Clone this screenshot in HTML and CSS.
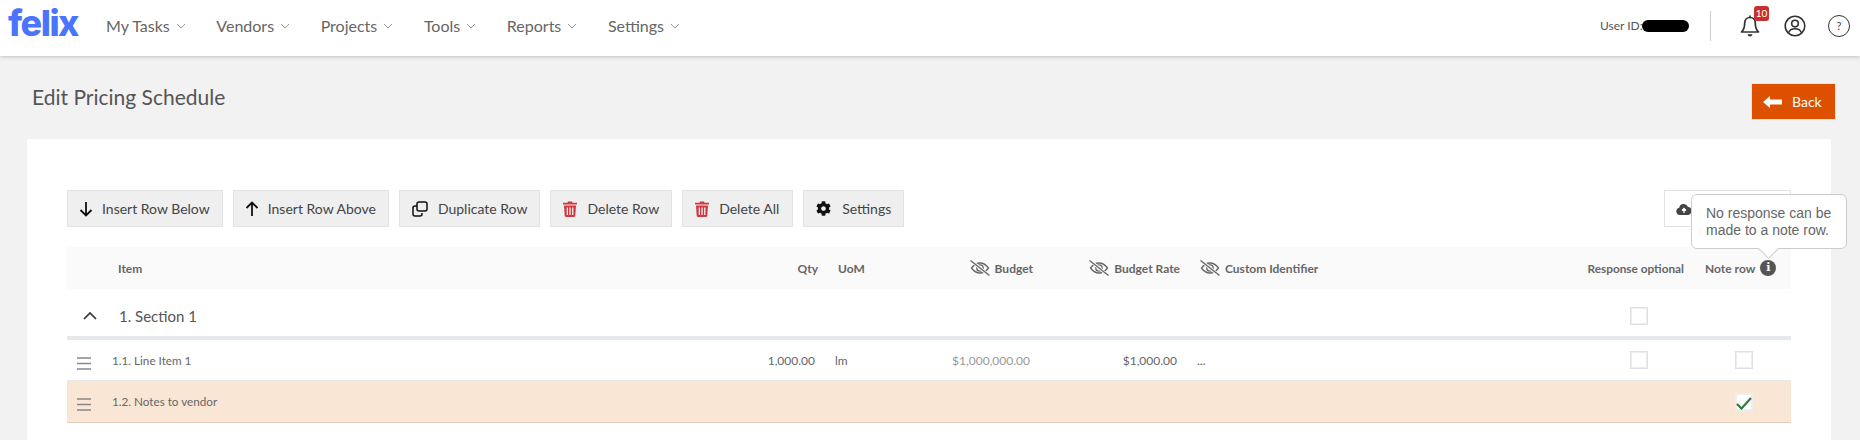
FILE: index.html
```html
<!DOCTYPE html>
<html lang="en">
<head>
<meta charset="utf-8">
<title>Edit Pricing Schedule</title>
<link rel="stylesheet" href="styles.css">
</head>
<body>
<svg class="sprites" width="0" height="0" aria-hidden="true">
  <symbol id="chev" viewBox="0 0 10 6"><path d="M1 1l4 4 4-4" fill="none" stroke="currentColor" stroke-width="1"/></symbol>
  <symbol id="eyeoff" viewBox="0 0 20 16"><path d="M1.5 8C4 4.6 6.800 3 10 3s6 1.600 8.500 5C16 11.400 13.200 13 10 13S4 11.400 1.500 8z" fill="none" stroke="currentColor" stroke-width="1.300"/><circle cx="10" cy="8" r="3.200" fill="none" stroke="currentColor" stroke-width="1.300"/><path d="M1 0.500L19 15.500" stroke="#fafafa" stroke-width="3"/><path d="M0.500 0.500L19.500 15.500" stroke="currentColor" stroke-width="1.300"/></symbol>
  <symbol id="trash" viewBox="0 0 14 16"><path d="M5 0.500h4l.6 1.300H14v1.700H0V1.800h4.400zM1 4.500h12l-.7 10.300c0 .7-.6 1.200-1.200 1.200H2.900c-.6 0-1.200-.5-1.200-1.200zM3.700 6.500v7.500h1.300V6.500zm2.700 0v7.500h1.300V6.500zm2.700 0v7.500h1.300V6.500z" fill="currentColor" fill-rule="evenodd"/></symbol>
  <symbol id="burger" viewBox="0 0 14 13"><path d="M0 1h14M0 6.500h14M0 12h14" stroke="currentColor" stroke-width="1.600"/></symbol>
</svg>

<header class="topbar">
  <div class="logo">felix</div>
  <nav class="nav">
    <a class="nav-item">My Tasks <svg class="chev"><use href="#chev"/></svg></a>
    <a class="nav-item">Vendors <svg class="chev"><use href="#chev"/></svg></a>
    <a class="nav-item">Projects <svg class="chev"><use href="#chev"/></svg></a>
    <a class="nav-item">Tools <svg class="chev"><use href="#chev"/></svg></a>
    <a class="nav-item">Reports <svg class="chev"><use href="#chev"/></svg></a>
    <a class="nav-item">Settings <svg class="chev"><use href="#chev"/></svg></a>
  </nav>
  <div class="user">
    <span class="user-id">User ID:</span><span class="redact"></span>
    <span class="divider"></span>
    <span class="bell">
      <svg class="bell-icon" viewBox="0 0 20 22"><path d="M10 2.500c3.300 0 5.300 2.500 5.300 5.800 0 4.700 1 6.500 3.200 8.700H1.500c2.200-2.200 3.200-4 3.200-8.700 0-3.300 2-5.800 5.300-5.800z" fill="none" stroke="#333" stroke-width="1.700" stroke-linejoin="round"/><path d="M10 0.500v2" stroke="#333" stroke-width="1.700"/><path d="M7.500 19.300h5c-.3 1.400-1.300 2.200-2.500 2.200s-2.200-.8-2.500-2.200z" fill="#333"/></svg>
      <span class="badge">10</span>
    </span>
    <svg class="round-icon" viewBox="0 0 22 22"><circle cx="11" cy="11" r="9.800" fill="none" stroke="#333" stroke-width="1.600"/><circle cx="11" cy="8.600" r="3.300" fill="none" stroke="#333" stroke-width="1.600"/><path d="M4.800 17.500c.8-2.500 3-3.700 6.200-3.700s5.400 1.200 6.200 3.700" fill="none" stroke="#333" stroke-width="1.600"/></svg>
    <span class="help">?</span>
  </div>
</header>

<main class="page">
  <div class="page-head">
    <h1 class="title">Edit Pricing Schedule</h1>
    <button class="back"><svg class="back-arrow" viewBox="0 0 19 12"><path d="M7 0v3.500h12v5H7V12L0 6z" fill="#fff"/></svg>Back</button>
  </div>

  <section class="card">
    <div class="toolbar">
      <button class="btn"><svg class="btn-icon" viewBox="0 0 14 16"><path d="M7 1v13.500M1.500 9L7 14.500 12.500 9" fill="none" stroke="#111" stroke-width="1.800"/></svg>Insert Row Below</button>
      <button class="btn"><svg class="btn-icon" viewBox="0 0 14 16"><path d="M7 15V1.500M1.500 7L7 1.500 12.500 7" fill="none" stroke="#111" stroke-width="1.800"/></svg>Insert Row Above</button>
      <button class="btn"><svg class="btn-icon wide" viewBox="0 0 16 16"><rect x="5" y="1" width="10" height="9" rx="2" fill="none" stroke="#111" stroke-width="1.500"/><path d="M5 5H3a2 2 0 0 0-2 2v6a2 2 0 0 0 2 2h5a2 2 0 0 0 2-2v-1" fill="none" stroke="#111" stroke-width="1.500"/></svg>Duplicate Row</button>
      <button class="btn"><svg class="btn-icon red"><use href="#trash"/></svg>Delete Row</button>
      <button class="btn btn-all"><svg class="btn-icon red"><use href="#trash"/></svg>Delete All</button>
      <button class="btn"><svg class="btn-icon gear" viewBox="0 0 512 512"><path fill="#111" d="M487.4 315.700l-42.600-24.600c4.300-23.200 4.300-47 0-70.200l42.600-24.600c4.900-2.800 7.100-8.600 5.500-14-11.100-35.600-30-67.800-54.700-94.600-3.800-4.100-10-5.100-14.800-2.300L380.800 110c-17.900-15.400-38.500-27.300-60.800-35.100V25.800c0-5.600-3.900-10.500-9.400-11.700-36.700-8.200-74.300-7.800-109.200 0-5.500 1.200-9.400 6.100-9.400 11.700V75c-22.200 7.900-42.800 19.800-60.800 35.100L88.700 85.500c-4.900-2.800-11-1.900-14.800 2.300-24.700 26.700-43.600 58.900-54.700 94.600-1.700 5.400.6 11.200 5.500 14L67.300 221c-4.300 23.200-4.300 47 0 70.200l-42.600 24.600c-4.900 2.800-7.100 8.600-5.500 14 11.100 35.600 30 67.800 54.700 94.600 3.800 4.100 10 5.100 14.800 2.300l42.600-24.600c17.900 15.400 38.500 27.300 60.800 35.100v49.200c0 5.600 3.900 10.500 9.400 11.700 36.700 8.200 74.300 7.800 109.200 0 5.500-1.200 9.400-6.100 9.400-11.700v-49.200c22.200-7.900 42.800-19.800 60.800-35.100l42.600 24.600c4.900 2.800 11 1.900 14.800-2.300 24.700-26.700 43.600-58.900 54.700-94.600 1.500-5.500-.7-11.300-5.600-14.100zM256 336c-44.100 0-80-35.900-80-80s35.900-80 80-80 80 35.900 80 80-35.900 80-80 80z"/></svg>Settings</button>
      <button class="btn upload"><svg class="btn-icon cloud" viewBox="0 0 16 12"><path d="M4 12a3.700 3.700 0 0 1-.8-7.300A4.600 4.600 0 0 1 11.900 3.700 4.200 4.200 0 0 1 12 12z" fill="#444"/><path d="M8 10V5.500M6 7.500l2-2 2 2" fill="none" stroke="#fff" stroke-width="1.300"/></svg></button>
    </div>

    <div class="tooltip-wrap">
      <div class="tooltip">No response can be made to a note row.</div>
    </div>

    <div class="table">
      <div class="row head">
        <span></span>
        <span class="c-item">Item</span>
        <span class="c-right">Qty</span>
        <span class="c-uom">UoM</span>
        <span class="c-right"><svg class="eye"><use href="#eyeoff"/></svg>Budget</span>
        <span class="c-right"><svg class="eye"><use href="#eyeoff"/></svg>Budget Rate</span>
        <span class="c-custom"><svg class="eye"><use href="#eyeoff"/></svg>Custom Identifier</span>
        <span class="c-resp">Response optional</span>
        <span class="c-note">Note row<span class="info">i</span></span>
      </div>
      <div class="row section">
        <span class="toggle"><svg class="up" viewBox="0 0 14 8"><path d="M1 7l6-6 6 6" fill="none" stroke="#333" stroke-width="1.700"/></svg></span>
        <span class="c-section">1. Section 1</span>
        <span></span><span></span><span></span><span></span><span></span>
        <span class="cell-resp"><span class="check"></span></span>
        <span></span>
      </div>
      <div class="row line">
        <span class="handle"><svg class="burger"><use href="#burger"/></svg></span>
        <span class="c-name">1.1. Line Item 1</span>
        <span class="v-right">1,000.00</span>
        <span class="c-unit">lm</span>
        <span class="v-right muted">$1,000,000.00</span>
        <span class="v-right">$1,000.00</span>
        <span class="c-custom-v">...</span>
        <span class="cell-resp"><span class="check"></span></span>
        <span class="cell-note"><span class="check"></span></span>
      </div>
      <div class="row line noted">
        <span class="handle"><svg class="burger"><use href="#burger"/></svg></span>
        <span class="c-name">1.2. Notes to vendor</span>
        <span></span><span></span><span></span><span></span><span></span><span></span>
        <span class="cell-note"><span class="check on"><svg class="tick" viewBox="0 0 16 14"><path d="M1 8l4.500 4.500L15 2" fill="none" stroke="#2f7a3b" stroke-width="2.200"/></svg></span></span>
      </div>
    </div>
  </section>
</main>
</body>
</html>
```

FILE: styles.css
```css
* { box-sizing: border-box; }
html, body { margin: 0; height: 440px; overflow: hidden; }
body { background: #f2f2f2; font-family: Lato, "Liberation Sans", sans-serif; color: #555; }
.sprites { position: absolute; }

.topbar {
  height: 56px; background: #fff; display: flex; align-items: center;
  padding: 0 10px 5px 8px; box-shadow: 0 1px 4px rgba(0,0,0,.2); position: relative;
}
.logo { font-family: Inter, Roboto, sans-serif; font-weight: 800; font-size: 36px; letter-spacing: -1.500px; color: #4a74fb; line-height: 51px; width: 98px; position: relative; top: -2px; }
.nav { display: flex; gap: 27.600px; }
.nav-item { display: flex; align-items: center; gap: 6px; font-size: 16px; color: #666; }
.chev { width: 10px; height: 6px; color: #999; margin-right: 3px; }
.user { margin-left: auto; display: flex; align-items: center; }
.user-id { font-size: 12px; color: #555; width: 42px; white-space: nowrap; }
.redact { width: 47px; height: 12px; border-radius: 6px; background: #000; }
.divider { width: 1px; height: 30px; background: #ccc; margin: 0 20px 0 21px; }
.bell { position: relative; width: 20px; height: 22px; margin: 0 0 0 9px; }
.bell-icon { width: 20px; height: 22px; display: block; }
.badge { position: absolute; left: 14px; top: -9px; width: 15px; height: 15px; border-radius: 3px; background: #c9302c; color: #fff; font-size: 10px; line-height: 15px; text-align: center; }
.round-icon { width: 22px; height: 22px; margin-left: 24px; }
.help { width: 22px; height: 22px; border: 1.6px solid #333; border-radius: 50%; margin-left: 22px; font-size: 11px; text-align: center; line-height: 19px; color: #444; }

.page { padding: 0 29px 0 27px; }
.page-head { height: 83px; display: flex; align-items: flex-start; justify-content: space-between; padding: 27px 0 0 5px; }
.title { margin: 0; font-size: 21px; font-weight: 400; color: #555; line-height: 28px; }
.back { width: 83px; height: 35px; margin: 1px -4px 0 0; background: #dc5000; color: #fff; border: 0; font: 14px Lato, sans-serif; display: flex; align-items: center; gap: 10px; padding: 0 0 0 11px; outline: 1px solid #e6e6e6; }
.back-arrow { width: 19px; height: 12px; }

.card { position: relative; background: #fff; height: 320px; padding: 51px 40px 0; }
.toolbar { display: flex; gap: 10px; height: 37px; }
.btn { height: 37px; background: #efefef; border: 1px solid #e3e3e3; font: 14px Lato, sans-serif; color: #444; display: flex; align-items: center; gap: 9px; padding: 0 12px 0 11px; white-space: nowrap; }
.btn-all { width: 111px; }
.btn-icon { width: 14px; height: 16px; color: #111; flex: none; }
.btn-icon.wide { width: 16px; margin: 0 1px; }
.btn-icon.red { color: #cf3a40; margin: 0 1px 0 1px; }
.btn-icon.gear { width: 15px; height: 15px; margin: 0 2px 0 1px; }
.upload { margin-left: auto; width: 127px; background: #fff; }
.cloud { width: 16px; height: 12px; }

.tooltip-wrap { position: absolute; left: 1664px; top: 55px; }
.tooltip { position: absolute; width: 156px; height: 55px; background: #fff; border: 1px solid #ccc; border-radius: 6px; padding: 10px 10px 10px 14px; font: 14px/17px "Liberation Sans", Arial, sans-serif; color: #666; z-index: 2; }
.tooltip::after { content: ""; position: absolute; left: 69px; top: 46px; width: 14px; height: 14px; background: #fff; border-right: 1px solid #ccc; border-bottom: 1px solid #ccc; transform: rotate(45deg); }

.table { margin-top: 20px; }
.row { display: grid; grid-template-columns: 45px 628px 78px 82px 133px 147px 350px 160px 101px; align-items: center; }
.head { height: 42px; background: #fafafa; font-size: 12px; font-weight: 700; color: #666; }
.c-item { padding-left: 6px; }
.c-right { display: flex; align-items: center; justify-content: flex-end; gap: 5px; }
.c-uom { padding-left: 20px; }
.c-unit { padding-left: 17px; color: #666; }
.c-custom { display: flex; align-items: center; gap: 5px; padding-left: 20px; }
.c-resp { text-align: right; padding-right: 6px; white-space: nowrap; font-size: 11.800px; }
.c-note { display: flex; align-items: center; gap: 5px; padding-left: 15px; white-space: nowrap; }
.eye { width: 20px; height: 16px; color: #666; flex: none; }
.info { width: 16px; height: 16px; border-radius: 50%; background: #555; color: #fff; font: 700 11px/16px "DejaVu Serif", serif; text-align: center; position: relative; z-index: 3; }

.section { height: 51px; border-bottom: 4px solid #e6e9ec; padding-top: 6px; }
.toggle { padding-left: 16px; display: flex; }
.up { width: 14px; height: 8px; }
.c-section { font-size: 15px; color: #555; padding-left: 7px; }
.cell-resp { display: flex; justify-content: flex-end; padding-right: 42px; }
.cell-note { padding-left: 45px; display: flex; }
.check { width: 18px; height: 18px; border: 1px solid #e0e0e0; outline: 1px solid #eee; outline-offset: -2px; background: #fff; display: block; position: relative; }
.check.on { border-color: #eee; }
.tick { position: absolute; left: 0; top: 2px; width: 16px; height: 14px; }

.line { height: 41px; border-bottom: 1px solid #e8e8e8; font-size: 12px; color: #555; }
.handle { padding-left: 10px; display: flex; padding-top: 6px; }
.burger { width: 14px; height: 13px; color: #888; }
.c-name { margin-top: -1px; font-size: 11.700px; color: #666; }
.v-right { text-align: right; padding-right: 3px; color: #666; }
.v-right.muted { color: #999; }
.c-custom-v { padding-left: 17px; }
.noted { height: 42px; background: #fae6d4; border-bottom: 1px solid #e3cdb8; color: #666; }
```
